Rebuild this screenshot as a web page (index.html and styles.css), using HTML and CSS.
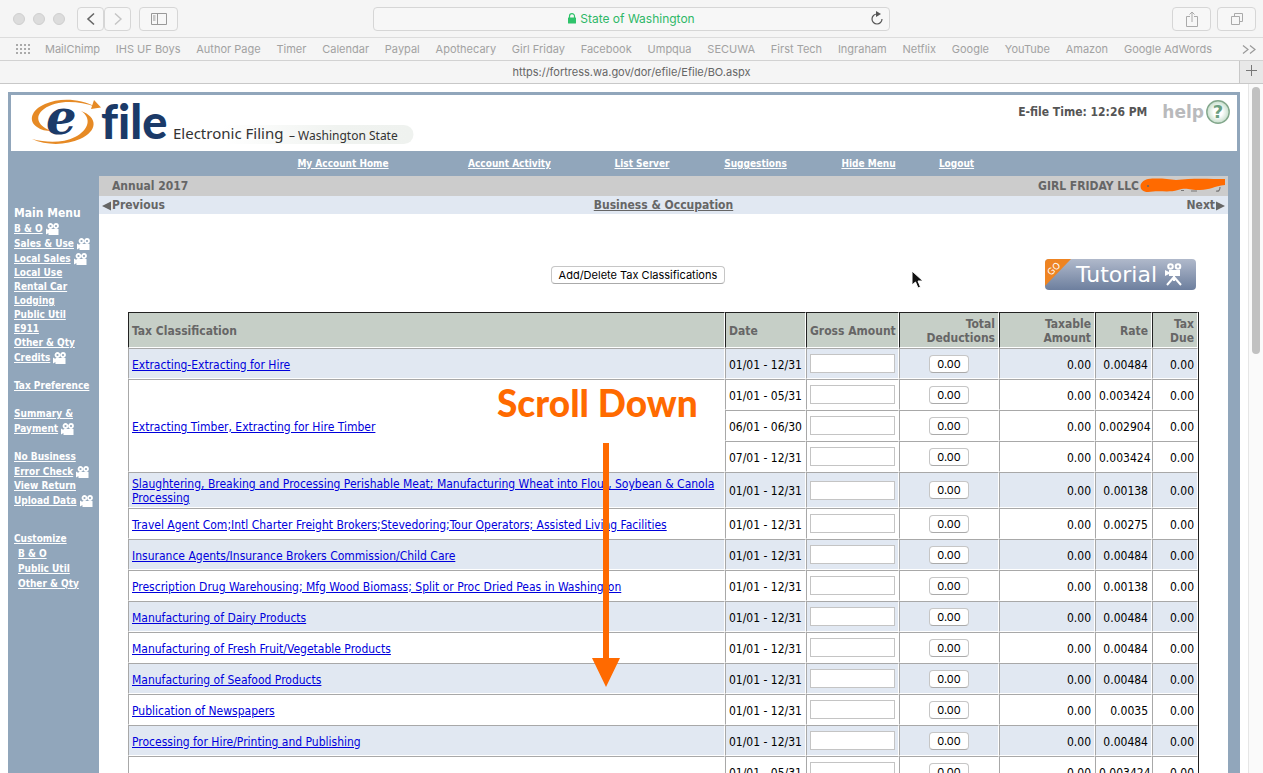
FILE: index.html
```html
<!DOCTYPE html>
<html lang="en">
	<head>
		<meta charset="utf-8">
		<meta name="viewport" content="width=device-width">
		<title>State of Washington</title>
		<link rel="stylesheet" href="styles.css">
	</head>
	<body>
	<svg width="0" height="0" class="defs">
		<symbol id="camera" viewBox="0 0 13 12">
			<path d="M0 5.500l2.500 1.500v3L0 11.500zM2.500 6h10v6h-10z" fill="#fff"/>
			<circle cx="4.500" cy="3" r="2" fill="none" stroke="#fff" stroke-width="1.800"/>
			<circle cx="10" cy="3" r="2" fill="none" stroke="#fff" stroke-width="1.800"/>
		</symbol>
	</svg>

	<!-- browser -->
	<div class="chrome">
		<div class="toolbar">
			<div class="tools">
				<span class="dot"></span><span class="dot"></span><span class="dot"></span>
				<div class="pair">
					<button class="tool small" aria-label="Back"><svg width="10" height="14" viewBox="0 0 10 14"><path d="M8 1.500L2 7l6 5.500" fill="none" stroke="#666" stroke-width="1.600"/></svg></button>
					<button class="tool small" aria-label="Forward"><svg width="10" height="14" viewBox="0 0 10 14"><path d="M2 1.500L8 7l-6 5.500" fill="none" stroke="#c4c4c4" stroke-width="1.400"/></svg></button>
				</div>
				<button class="tool" aria-label="Sidebar"><svg width="16" height="12" viewBox="0 0 16 12"><path d="M.5.500h15v11H.5zM6.500.500v11M2 3h2.500M2 5h2.500M2 7h2.500" fill="none" stroke="#999"/></svg></button>
			</div>
			<div class="address">
				<svg class="lock" width="8" height="11" viewBox="0 0 8 11"><rect y="4.500" width="8" height="6" rx=".5" fill="#2fc36b"/><path d="M1.500 5V3.200a2.500 2.500 0 0 1 5 0V5" fill="none" stroke="#2fc36b" stroke-width="1.200"/></svg>
				<span>State of Washington</span>
				<button class="reload" aria-label="Reload"><svg width="14" height="15" viewBox="0 0 14 15"><path d="M8 3H7a5 5 0 1 0 5 5" fill="none" stroke="#555" stroke-width="1.200"/><path d="M6 0l5 3-5 3z" fill="#555"/></svg></button>
			</div>
			<div class="tools right">
				<button class="tool" aria-label="Share"><svg width="12" height="16" viewBox="0 0 12 16"><path d="M4 5.500H.5v10h11v-10H8M6 11V1M3.500 3.500L6 1l2.500 2.500" fill="none" stroke="#aaa"/></svg></button>
				<button class="tool" aria-label="Tabs"><svg width="12" height="12" viewBox="0 0 12 12"><path d="M.5 3.500h8v8h-8zM3.500 3.500v-3h8v8h-3" fill="none" stroke="#aaa"/></svg></button>
			</div>
		</div>
		<div class="bookmarks">
			<svg class="grid" width="14" height="10" viewBox="0 0 14 10"><path d="M0 1h14M0 5h14M0 9h14" stroke="#aaa" stroke-width="2" stroke-dasharray="2 2"/></svg>
			<div class="marks">
				<a href="#">MailChimp</a><a href="#">IHS UF Boys</a><a href="#">Author Page</a><a href="#">Timer</a><a href="#">Calendar</a><a href="#">Paypal</a><a href="#">Apothecary</a><a href="#">Girl Friday</a><a href="#">Facebook</a><a href="#">Umpqua</a><a href="#">SECUWA</a><a href="#">First Tech</a><a href="#">Ingraham</a><a href="#">Netflix</a><a href="#">Google</a><a href="#">YouTube</a><a href="#">Amazon</a><a href="#">Google AdWords</a>
			</div>
			<svg width="14" height="9" viewBox="0 0 14 9"><path d="M1 .5l5 4-5 4M8 .5l5 4-5 4" fill="none" stroke="#999" stroke-width="1.200"/></svg>
		</div>
		<div class="tabs">
			<div class="tab">https://fortress.wa.gov/dor/efile/Efile/BO.aspx</div>
			<button class="newtab" aria-label="New tab"><svg width="11" height="11" viewBox="0 0 11 11"><path d="M5.500 0v11M0 5.500h11" stroke="#777"/></svg></button>
		</div>
	</div>

	<div class="view">
	<div class="page">
		<header>
			<svg class="logo" width="394" height="56" viewBox="0 0 394 56" role="img" aria-label="efile Electronic Filing - Washington State">
				<defs>
					<linearGradient id="pill"><stop offset="0" stop-color="#fff"/><stop offset=".6" stop-color="#f0f3f0"/><stop offset="1" stop-color="#eff2ef"/></linearGradient>
				</defs>
				<path d="M200 30h181a9 9 0 0 1 0 19H200z" fill="url(#pill)"/>
				<path d="M73 12C56 3 36 3 22 9C8 15 5 26 14 32C18 35 23 36 29 36C16 32 10 22 21 14C33 5 54 5 73 12z" fill="#e68a25"/>
				<path d="M71 5l7 7.500-10 1.500z" fill="#e68a25"/>
				<path d="M58 16C75 22 75 36 57 44C44 50 24 51 9 44C24 48 40 48 52 42C66 35 69 23 58 16z" fill="#e68a25"/>
				<text x="23" y="39" class="logo-e">e</text>
				<text x="78" y="44" class="logo-file">file</text>
				<text x="150" y="44" class="logo-sub">Electronic Filing</text>
				<text x="266" y="45" class="logo-state">– Washington State</text>
			</svg>
			<div class="status">
				<span>E-file Time: 12:26 PM</span>
				<a class="help" href="#">help
					<svg width="24" height="24" viewBox="0 0 24 24">
						<defs><radialGradient id="glass"><stop offset=".4" stop-color="#fff"/><stop offset="1" stop-color="#c4ddca"/></radialGradient></defs>
						<circle cx="12" cy="12" r="11.200" fill="url(#glass)" stroke="#83a78c" stroke-width="1.400"/>
						<text x="12" y="18" text-anchor="middle" class="mark">?</text>
					</svg>
				</a>
			</div>
		</header>
		<nav class="top">
			<a href="#">My Account Home</a>
			<a href="#">Account Activity</a>
			<a href="#">List Server</a>
			<a href="#">Suggestions</a>
			<a href="#">Hide Menu</a>
			<a href="#">Logout</a>
		</nav>
		<div class="columns">
			<nav class="side">
				<h2>Main Menu</h2>
				<ul>
					<li class="film"><a href="#">B &amp; O</a> <svg class="cam"><use href="#camera"/></svg></li>
					<li class="film"><a href="#">Sales &amp; Use</a> <svg class="cam"><use href="#camera"/></svg></li>
					<li class="film"><a href="#">Local Sales</a> <svg class="cam"><use href="#camera"/></svg></li>
					<li><a href="#">Local Use</a></li>
					<li><a href="#">Rental Car</a></li>
					<li><a href="#">Lodging</a></li>
					<li><a href="#">Public Util</a></li>
					<li><a href="#">E911</a></li>
					<li><a href="#">Other &amp; Qty</a></li>
					<li class="film"><a href="#">Credits</a> <svg class="cam"><use href="#camera"/></svg></li>
				</ul>
				<ul>
					<li><a href="#">Tax Preference</a></li>
				</ul>
				<ul>
					<li><a href="#">Summary &amp;</a></li>
					<li class="film"><a href="#">Payment</a> <svg class="cam"><use href="#camera"/></svg></li>
				</ul>
				<ul>
					<li><a href="#">No Business</a></li>
					<li class="film"><a href="#">Error Check</a> <svg class="cam"><use href="#camera"/></svg></li>
					<li><a href="#">View Return</a></li>
					<li class="film"><a href="#">Upload Data</a> <svg class="cam"><use href="#camera"/></svg></li>
				</ul>
				<ul class="custom">
					<li class="film"><a href="#">Customize</a></li>
					<li class="film sub"><a href="#">B &amp; O</a></li>
					<li class="film sub"><a href="#">Public Util</a></li>
					<li class="film sub"><a href="#">Other &amp; Qty</a></li>
				</ul>
			</nav>
			<main>
				<div class="period">
					<span>Annual 2017</span>
					<span class="account">GIRL FRIDAY LLC
						<svg width="86" height="16" viewBox="0 0 86 16">
							<path d="M41 12.500h3M51 13h6M76 13q4 1 4-4" fill="none" stroke="#777" stroke-width="1.200"/>
							<path d="M8 1C18 0 28 1 36 2C52 0 70 1 85 1V7C74 8 70 12 60 12C50 12 46 9 38 12C28 15 20 12 8 14C-2 14-2 3 8 1z" fill="#ff6a00"/>
							<circle cx="8" cy="8" r="1" fill="#666"/>
						</svg>
					</span>
				</div>
				<div class="pager">
					<a href="#"><svg width="9" height="10" viewBox="0 0 9 10"><path d="M0 5l9-4.500v9z" fill="#666"/></svg>Previous</a>
					<h1>Business &amp; Occupation</h1>
					<a class="next" href="#">Next<svg width="9" height="10" viewBox="0 0 9 10"><path d="M9 5L0 .5v9z" fill="#666"/></svg></a>
				</div>
				<div class="actions">
					<button class="btn">Add/Delete Tax Classifications</button>
					<a class="tutorial" href="#">
						<svg class="go" width="26" height="27" viewBox="0 0 26 27"><path d="M0 0h26L0 27z" fill="#ee8422"/><text class="go-text" x="6" y="17" transform="rotate(-45 6 17)">GO</text></svg>
						<span>Tutorial</span>
						<svg width="17" height="23" viewBox="0 0 17 23"><g fill="none" stroke="#fff"><circle cx="5.500" cy="3.500" r="2.300" stroke-width="2"/><circle cx="13" cy="3.500" r="2.300" stroke-width="2"/><path d="M9 13v5M9 14l-7 8M9 14l7 8" stroke-width="2"/></g><path d="M4 7h11v6H4V11l-4 2V7l4 2z" fill="#fff"/></svg>
					</a>
				</div>
				<table>
					<colgroup><col><col class="c-date"><col class="c-gross"><col class="c-ded"><col class="c-amt"><col class="c-rate"><col class="c-due"></colgroup>
					<thead>
						<tr><th>Tax Classification</th><th>Date</th><th>Gross Amount</th><th class="num">Total<br>Deductions</th><th class="num">Taxable<br>Amount</th><th class="num">Rate</th><th class="num">Tax<br>Due</th></tr>
					</thead>
					<tbody>
						<tr class="odd"><td><a href="#">Extracting-Extracting for Hire</a></td><td>01/01 - 12/31</td><td class="gross"><input type="text" aria-label="Gross amount"></td><td class="mid"><button class="btn">0.00</button></td><td class="num">0.00</td><td class="num">0.00484</td><td class="num">0.00</td></tr>
						<tr><td rowspan="3"><a href="#">Extracting Timber, Extracting for Hire Timber</a></td><td>01/01 - 05/31</td><td class="gross"><input type="text" aria-label="Gross amount"></td><td class="mid"><button class="btn">0.00</button></td><td class="num">0.00</td><td class="num">0.003424</td><td class="num">0.00</td></tr>
						<tr><td>06/01 - 06/30</td><td class="gross"><input type="text" aria-label="Gross amount"></td><td class="mid"><button class="btn">0.00</button></td><td class="num">0.00</td><td class="num">0.002904</td><td class="num">0.00</td></tr>
						<tr><td>07/01 - 12/31</td><td class="gross"><input type="text" aria-label="Gross amount"></td><td class="mid"><button class="btn">0.00</button></td><td class="num">0.00</td><td class="num">0.003424</td><td class="num">0.00</td></tr>
						<tr class="odd"><td><a href="#">Slaughtering, Breaking and Processing Perishable Meat; Manufacturing Wheat into Flour, Soybean &amp; Canola Processing</a></td><td>01/01 - 12/31</td><td class="gross"><input type="text" aria-label="Gross amount"></td><td class="mid"><button class="btn">0.00</button></td><td class="num">0.00</td><td class="num">0.00138</td><td class="num">0.00</td></tr>
						<tr><td><a href="#">Travel Agent Com;Intl Charter Freight Brokers;Stevedoring;Tour Operators; Assisted Living Facilities</a></td><td>01/01 - 12/31</td><td class="gross"><input type="text" aria-label="Gross amount"></td><td class="mid"><button class="btn">0.00</button></td><td class="num">0.00</td><td class="num">0.00275</td><td class="num">0.00</td></tr>
						<tr class="odd"><td><a href="#">Insurance Agents/Insurance Brokers Commission/Child Care</a></td><td>01/01 - 12/31</td><td class="gross"><input type="text" aria-label="Gross amount"></td><td class="mid"><button class="btn">0.00</button></td><td class="num">0.00</td><td class="num">0.00484</td><td class="num">0.00</td></tr>
						<tr><td><a href="#">Prescription Drug Warehousing; Mfg Wood Biomass; Split or Proc Dried Peas in Washington</a></td><td>01/01 - 12/31</td><td class="gross"><input type="text" aria-label="Gross amount"></td><td class="mid"><button class="btn">0.00</button></td><td class="num">0.00</td><td class="num">0.00138</td><td class="num">0.00</td></tr>
						<tr class="odd"><td><a href="#">Manufacturing of Dairy Products</a></td><td>01/01 - 12/31</td><td class="gross"><input type="text" aria-label="Gross amount"></td><td class="mid"><button class="btn">0.00</button></td><td class="num">0.00</td><td class="num">0.00484</td><td class="num">0.00</td></tr>
						<tr><td><a href="#">Manufacturing of Fresh Fruit/Vegetable Products</a></td><td>01/01 - 12/31</td><td class="gross"><input type="text" aria-label="Gross amount"></td><td class="mid"><button class="btn">0.00</button></td><td class="num">0.00</td><td class="num">0.00484</td><td class="num">0.00</td></tr>
						<tr class="odd"><td><a href="#">Manufacturing of Seafood Products</a></td><td>01/01 - 12/31</td><td class="gross"><input type="text" aria-label="Gross amount"></td><td class="mid"><button class="btn">0.00</button></td><td class="num">0.00</td><td class="num">0.00484</td><td class="num">0.00</td></tr>
						<tr><td><a href="#">Publication of Newspapers</a></td><td>01/01 - 12/31</td><td class="gross"><input type="text" aria-label="Gross amount"></td><td class="mid"><button class="btn">0.00</button></td><td class="num">0.00</td><td class="num">0.0035</td><td class="num">0.00</td></tr>
						<tr class="odd"><td><a href="#">Processing for Hire/Printing and Publishing</a></td><td>01/01 - 12/31</td><td class="gross"><input type="text" aria-label="Gross amount"></td><td class="mid"><button class="btn">0.00</button></td><td class="num">0.00</td><td class="num">0.00484</td><td class="num">0.00</td></tr>
						<tr><td></td><td>01/01 - 05/31</td><td class="gross"><input type="text" aria-label="Gross amount"></td><td class="mid"><button class="btn">0.00</button></td><td class="num">0.00</td><td class="num">0.003424</td><td class="num">0.00</td></tr>
					</tbody>
				</table>
			</main>
		</div>
	</div>
	<div class="scrollbar"><div class="thumb"></div></div>
	</div>

	<!-- notes on top of the page -->
	<div class="note">Scroll Down</div>
	<svg class="arrow" width="28" height="244" viewBox="0 0 28 244"><path d="M11 0h6v215h11L14 244 0 215h11z" fill="#ff6a00"/></svg>
	<svg class="cursor" width="14" height="20" viewBox="0 0 14 20"><path d="M1 1v14l3.500-3 2.500 6 2.500-1-2.500-6H12z" fill="#111" stroke="#fff"/></svg>
	</body>
</html>
```
FILE: styles.css
```css
body{
	margin:0px;
	height:100vh;
	display:flex;
	flex-direction:column;
	overflow:hidden;
	position:relative;
	background-color:#fff;
	font-family:"DejaVu Sans Condensed","DejaVu Sans",Tahoma,sans-serif;
	font-size:12px;
	line-height:14px;
}
svg{flex:none;}
.defs{position:absolute;}
button{
	font-family:Inter,sans-serif;
	font-size:11px;
	padding:0;
}

/* browser */
.chrome{
	flex:none;
	background-color:#f5f5f5;
	font-family:Inter,sans-serif;
	font-size:11px;
}
.toolbar{
	display:grid;
	grid-template-columns:1fr 41% 1fr;
	align-items:center;
	height:37px;
	border-bottom:1px solid #dcdcdc;
}
.tools{
	display:flex;
	align-items:center;
	gap:8px;
	padding-left:13px;
}
.right{
	justify-content:flex-end;
	gap:6px;
	padding-right:7px;
}
.dot{
	width:10px;
	height:10px;
	border:1px solid #cfcfcf;
	border-radius:50%;
	background-color:#dcdcdc;
}
.pair{
	display:flex;
	margin-left:4px;
}
.tool{
	display:flex;
	align-items:center;
	justify-content:center;
	width:39px;
	height:24px;
	border:1px solid #d6d6d6;
	border-radius:4px;
	background-color:#f7f7f7;
}
.small{width:27px;}
.address{
	display:flex;
	align-items:center;
	justify-content:center;
	gap:4px;
	height:22px;
	position:relative;
	border:1px solid #d6d6d6;
	border-radius:4px;
	background-color:#f7f7f7;
	color:#2fb768;
	font-size:12px;
}
.reload{
	position:absolute;
	right:5px;
	top:3px;
	border:0;
	background:none;
}
.bookmarks{
	display:flex;
	align-items:center;
	height:22px;
	padding:0 7px 0 16px;
	border-bottom:1px solid #d2d2d2;
}
.marks{
	flex:auto;
	display:flex;
	justify-content:space-between;
	margin:0 30px 0 15px;
}
.marks a{
	color:#a2a2a2;
	text-decoration:none;
	white-space:nowrap;
}
.tabs{
	display:flex;
	height:22px;
	border-bottom:1px solid #c8c8c8;
	line-height:22px;
}
.tab{
	flex:auto;
	padding-left:24px;
	text-align:center;
	color:#666;
}
.newtab{
	width:24px;
	border:0;
	border-left:1px solid #c8c8c8;
	background-color:#e8e8e8;
}

/* page */
.view{
	flex:1;
	min-height:0;
	display:flex;
}
.page{
	flex:1;
	display:flex;
	flex-direction:column;
	margin:8px 8px 0;
	background-color:#91a6bb;
	overflow:hidden;
}
.scrollbar{
	width:14px;
	border-left:1px solid #e6e6e6;
	background-color:#fafafa;
}
.thumb{
	width:8px;
	height:267px;
	margin:3px auto;
	border-radius:4px;
	background-color:#c1c1c1;
}
header{
	display:flex;
	justify-content:space-between;
	margin:3px 3px 0;
	height:56px;
	background-color:#fff;
}
.logo{
	margin-left:12px;
	overflow:visible;
}
.logo-e{
	font:italic bold 48px "DejaVu Serif",serif;
	fill:#1b3a68;
}
.logo-file{
	font:900 47px Lato,sans-serif;
	font-variant-ligatures:none;
	fill:#1b3a68;
}
.logo-sub{
	font:15px "Noto Sans",sans-serif;
	fill:#333;
}
.logo-state{
	font:12px "Noto Sans",sans-serif;
	fill:#333;
}
.status{
	display:flex;
	align-items:flex-start;
	gap:15px;
	padding:5px 7px;
	font-weight:bold;
	color:#555;
	line-height:24px;
}
.help{
	display:flex;
	gap:2px;
	color:#b9babc;
	font-family:"DejaVu Sans",Verdana,sans-serif;
	font-size:17px;
	text-decoration:none;
}
.mark{
	font:bold 18px "DejaVu Sans",sans-serif;
	fill:#6b9f80;
}
.top{
	display:grid;
	grid-template-columns:172fr 161fr 104fr 123fr 103fr 73fr;
	margin:0 247px 0 249px;
	text-align:center;
	font-size:10px;
	font-weight:bold;
	line-height:25px;
}
.top a,.side a{color:#fff;}
.columns{
	flex:1;
	display:flex;
	padding-right:12px;
}
.side{
	flex:none;
	width:85px;
	padding:30px 0 0 6px;
	font-size:10px;
	font-weight:bold;
	white-space:nowrap;
}
.side h2{
	margin:0;
	color:#fff;
	font-size:12px;
	line-height:15px;
}
.side ul{
	list-style:none;
	margin:0 0 14px;
	padding:0;
}
.side .custom{margin-top:23px;}
.film{
	display:flex;
	align-items:center;
	gap:3px;
	height:15px;
}
.sub{padding-left:4px;}
.cam{
	width:13px;
	height:12px;
}
main{
	flex:1;
	background-color:#fff;
}
.period{
	display:flex;
	justify-content:space-between;
	padding:0 2px 0 13px;
	background-color:#ccc;
	color:#666;
	font-weight:bold;
	line-height:20px;
}
.account{
	display:flex;
	align-items:center;
	gap:1px;
}
.pager{
	display:grid;
	grid-template-columns:1fr auto 1fr;
	padding:1px 3px 0;
	background-color:#e1e8f2;
	color:#666;
	font-weight:bold;
	line-height:17px;
}
.pager h1{
	margin:0;
	font-size:12px;
	text-decoration:underline;
}
.pager a{
	display:flex;
	align-items:center;
	gap:1px;
	color:#666;
	text-decoration:none;
}
.pager .next{justify-content:flex-end;}
.actions{
	display:flex;
	justify-content:space-between;
	align-items:center;
	padding:45px 32px 22px 40%;
}
.btn{
	height:18px;
	padding:0 7px;
	border:1px solid #c6c6c6;
	border-bottom-color:#aaa;
	border-radius:4px;
	background-color:#fff;
	color:#000;
}
.tutorial{
	display:flex;
	align-items:center;
	justify-content:flex-end;
	gap:8px;
	width:137px;
	height:31px;
	padding-right:14px;
	position:relative;
	overflow:hidden;
	border-radius:4px;
	background:linear-gradient(#b0b9cb,#6d7f9e);
	color:#fff;
	font-family:"DejaVu Sans",Verdana,sans-serif;
	font-size:22px;
	text-decoration:none;
}
.go{
	position:absolute;
	left:0;
	top:0;
}
.go-text{
	font:9px "DejaVu Sans",sans-serif;
	fill:#fff;
}
table{
	width:calc(100% - 58px);
	margin:0 29px;
	table-layout:fixed;
	border-spacing:0;
	border-right:1px solid #222;
}
.c-date{width:81px;}
.c-gross{width:93px;}
.c-ded{width:100px;}
.c-amt{width:96px;}
.c-rate{width:57px;}
.c-due{width:46px;}
th,td{
	box-sizing:border-box;
	height:31px;
	padding:4px 3px 2px;
	border:1px solid #fff;
	border-left-color:#a8a8a8;
	border-top-color:#a8a8a8;
	background-clip:padding-box;
	text-align:left;
	white-space:nowrap;
}
th{
	height:36px;
	border-left-color:#222;
	border-top-color:#222;
	background-color:#c6cfc7;
	color:#666;
}
td:first-child{white-space:normal;}
.odd td{background-color:#e1e8f2;}
td a{color:#0000dc;}
td input{
	display:block;
	box-sizing:border-box;
	width:100%;
	height:19px;
	border:1px solid #c4c4c4;
	background-color:#fff;
}
.num{text-align:right;}
.gross,.mid{padding:3px;}
.mid .btn{
	display:block;
	margin:0 auto;
}

/* notes */
.note{
	position:absolute;
	left:497px;
	top:380px;
	color:#ff6a00;
	font:900 37px/46px Lato,sans-serif;
}
.arrow{
	position:absolute;
	left:592px;
	top:443px;
}
.cursor{
	position:absolute;
	left:911px;
	top:270px;
}
```
